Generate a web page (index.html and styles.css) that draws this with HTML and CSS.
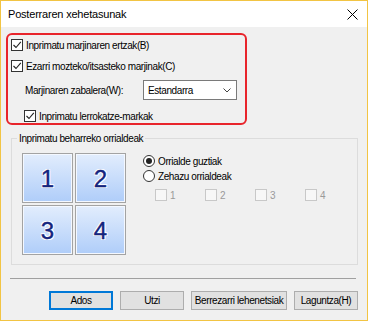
FILE: index.html
```html
<!DOCTYPE html>
<html>
<head>
<meta charset="utf-8">
<link rel="stylesheet" href="styles.css">
</head>
<body>
<div class="window">
  <div class="titlebar">
    <span class="title">Posterraren xehetasunak</span>
    <svg class="close" width="11" height="11" viewBox="0 0 11 11"><path d="M0.5 0.5 L10.5 10.5 M10.5 0.5 L0.5 10.5" stroke="#000" stroke-width="1" fill="none"/></svg>
  </div>
  <div class="content">
    <div class="highlight">
      <div class="row row-b">
        <span class="cb"><svg width="10" height="10" viewBox="0 0 10 10"><path d="M1.5 5 L4 7.5 L8.8 1.8" stroke="#222" stroke-width="1.1" fill="none"/></svg></span>
        <span class="lbl">Inprimatu marjinaren ertzak(B)</span>
      </div>
      <div class="row row-c">
        <span class="cb"><svg width="10" height="10" viewBox="0 0 10 10"><path d="M1.5 5 L4 7.5 L8.8 1.8" stroke="#222" stroke-width="1.1" fill="none"/></svg></span>
        <span class="lbl">Ezarri mozteko/itsasteko marjinak(C)</span>
      </div>
      <div class="row row-w">
        <span class="lbl-w">Marjinaren zabalera(W):</span>
        <div class="select">
          <span>Estandarra</span>
          <svg width="8" height="5" viewBox="0 0 8 5"><path d="M0.5 0.5 L4 4 L7.5 0.5" stroke="#444" stroke-width="1" fill="none"/></svg>
        </div>
      </div>
      <div class="row row-sub">
        <span class="cb"><svg width="10" height="10" viewBox="0 0 10 10"><path d="M1.5 5 L4 7.5 L8.8 1.8" stroke="#222" stroke-width="1.1" fill="none"/></svg></span>
        <span class="lbl">Inprimatu lerrokatze-markak</span>
      </div>
    </div>

    <fieldset class="group">
      <legend>Inprimatu beharreko orrialdeak</legend>
      <div class="group-body">
        <div class="tiles">
          <div class="tile">1</div>
          <div class="tile">2</div>
          <div class="tile">3</div>
          <div class="tile">4</div>
        </div>
        <div class="options">
          <div class="radio-row"><span class="radio on"></span><span class="lbl">Orrialde guztiak</span></div>
          <div class="radio-row"><span class="radio"></span><span class="lbl">Zehazu orrialdeak</span></div>
          <div class="pages">
            <div class="page"><span class="cb off"></span><span>1</span></div>
            <div class="page"><span class="cb off"></span><span>2</span></div>
            <div class="page"><span class="cb off"></span><span>3</span></div>
            <div class="page"><span class="cb off"></span><span>4</span></div>
          </div>
        </div>
      </div>
    </fieldset>

    <div class="sep"></div>

    <div class="buttons">
      <div class="btn default">Ados</div>
      <div class="btn">Utzi</div>
      <div class="btn wide">Berrezarri lehenetsiak</div>
      <div class="btn">Laguntza(H)</div>
    </div>
  </div>
</div>
</body>
</html>
```

FILE: styles.css
```css
html, body {
  margin: 0;
  padding: 0;
  background: #f0f0f0;
}
.window {
  box-sizing: border-box;
  width: 368px;
  height: 321px;
  border: 1px solid #f2c443;
  background: #f0f0f0;
  font-family: "Liberation Sans", Arial, sans-serif;
  font-size: 10px;
  letter-spacing: -0.4px;
  color: #000;
  display: flex;
  flex-direction: column;
}
.titlebar {
  height: 26px;
  background: #fff;
  display: flex;
  align-items: center;
  justify-content: space-between;
  padding: 0 9px 0 7px;
}
.title {
  font-size: 11px;
  letter-spacing: -0.2px;
}
.close {
  display: block;
  margin-top: 1px;
}
.content {
  display: flex;
  flex-direction: column;
}
.highlight {
  box-sizing: border-box;
  margin: 6px 0 0 5px;
  width: 241px;
  height: 92px;
  border: 2px solid #e8242b;
  border-radius: 6px;
  padding: 4px 0 0 3px;
  display: flex;
  flex-direction: column;
}
.row {
  display: flex;
  align-items: center;
  height: 12px;
}
.row-c { margin-top: 9px; }
.row-w { margin-top: 8px; height: 20px; }
.row-sub { margin-top: 10px; padding-left: 13px; }
.cb {
  box-sizing: border-box;
  width: 12px;
  height: 12px;
  border: 1px solid #333;
  background: #fff;
  display: flex;
  align-items: center;
  justify-content: center;
  flex: none;
}
.cb svg { display: block; }
.lbl { margin-left: 3px; white-space: nowrap; }
.lbl-w {
  padding-left: 14px;
  width: 118px;
  flex: none;
  white-space: nowrap;
}
.select {
  box-sizing: border-box;
  width: 94px;
  height: 20px;
  border: 1px solid #7a7a7a;
  background: #fff;
  display: flex;
  align-items: center;
  justify-content: space-between;
  padding: 0 4px 0 4px;
}
.select svg { display: block; margin-right: 1px; }

.group {
  box-sizing: border-box;
  margin: 7px 9px 0 10px;
  width: 347px;
  height: 133px;
  border: 1px solid #dcdcdc;
  padding: 8px 0 0 10px;
  min-width: 0;
}
.group legend {
  margin-left: -5px;
  padding: 0 2px;
  line-height: 13px;
}
.group-body {
  display: flex;
}
.tiles {
  display: grid;
  grid-template-columns: 51px 51px;
  grid-template-rows: 50px 50px;
  gap: 2px 2px;
}
.tile {
  box-sizing: border-box;
  border: 1px solid #a3a3a3;
  box-shadow: inset 0 0 0 1px #f4f8ff;
  background: linear-gradient(#e2edfd, #afcdf9);
  display: flex;
  align-items: center;
  justify-content: center;
  font-family: "Liberation Sans", Arial, sans-serif;
  font-size: 24px;
  letter-spacing: 0;
  color: #14257e;
  -webkit-text-stroke: 0.4px #14257e;
  text-shadow: 0 0 1px #fff, 1px 1px 0 #fff, -1px -1px 0 #fff, 1px -1px 0 #fff, -1px 1px 0 #fff;
  padding-top: 1px;
}
.options {
  margin-left: 17px;
  padding-top: 2px;
  display: flex;
  flex-direction: column;
}
.radio-row {
  display: flex;
  align-items: center;
  height: 12px;
}
.radio-row + .radio-row { margin-top: 3px; }
.radio {
  box-sizing: border-box;
  width: 12px;
  height: 12px;
  border: 1px solid #333;
  border-radius: 50%;
  background: #fff;
  display: flex;
  align-items: center;
  justify-content: center;
  flex: none;
}
.radio.on::after {
  content: "";
  width: 6px;
  height: 6px;
  border-radius: 50%;
  background: #222;
}
.pages {
  display: flex;
  margin: 7px 0 0 12px;
}
.page {
  width: 50px;
  display: flex;
  align-items: center;
  color: #9a9a9a;
}
.page .cb.off {
  border-color: #c8c8c8;
  background: #f7f7f7;
  margin-right: 3px;
}
.sep {
  margin: 13px 0 0 9px;
  width: 346px;
  height: 1px;
  background: #a0a0a0;
}
.buttons {
  display: flex;
  justify-content: flex-end;
  gap: 7px;
  margin: 12px 9px 0 0;
}
.btn {
  box-sizing: border-box;
  width: 64px;
  height: 19px;
  border: 1px solid #adadad;
  background: #e1e1e1;
  display: flex;
  align-items: center;
  justify-content: center;
  white-space: nowrap;
}
.btn.wide { width: 96px; }
.btn.default {
  border: 2px solid #0078d7;
}
```
